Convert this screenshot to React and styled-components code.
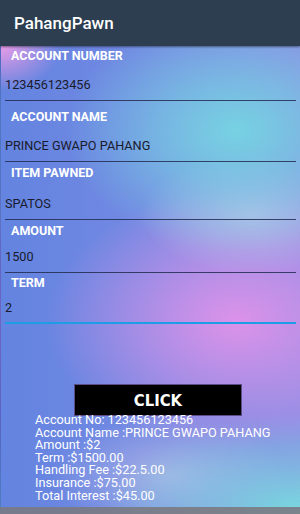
import React from "react";
import styled, { createGlobalStyle } from "styled-components";

const Global = createGlobalStyle`
  html, body {
    margin: 0;
    padding: 0;
    height: 100%;
  }
  body {
    font-family: Roboto, "Liberation Sans", sans-serif;
  }
  #root {
    height: 100%;
  }
`;

const Screen = styled.div`
  position: relative;
  height: 514px;
  overflow: hidden;
  display: flex;
  flex-direction: column;
`;

const Toolbar = styled.div`
  height: 46px;
  flex-shrink: 0;
  background: #2c3e50;
  display: flex;
  align-items: center;
  padding-left: 14px;
  color: #fff;
  font-size: 17px;
  font-weight: 500;
  box-shadow: 0 1px 2px rgba(0, 0, 0, 0.45);
  position: relative;
  z-index: 1;
`;

/* gradient blobs measured from the content top (y = 46) */
const Content = styled.div`
  flex: 1;
  display: flex;
  flex-direction: column;
  border-left: 1px solid rgba(50, 70, 170, 0.6);
  background:
    radial-gradient(60px 45px at 0px 0px, #e99ce6 0%, rgba(233, 156, 230, 0) 100%),
    radial-gradient(170px 120px at 235px 85px, #76d2e2 0%, rgba(118, 210, 226, 0.6) 45%, rgba(118, 210, 226, 0) 100%),
    radial-gradient(110px 60px at 250px 168px, #b6bce8 0%, rgba(182, 188, 232, 0) 100%),
    radial-gradient(190px 130px at 235px 275px, #dc92e9 0%, rgba(220, 146, 233, 0.55) 45%, rgba(220, 146, 233, 0) 100%),
    radial-gradient(200px 100px at 300px 468px, #78dbde 0%, rgba(120, 219, 222, 0.5) 45%, rgba(120, 219, 222, 0) 100%),
    radial-gradient(120px 60px at 170px 430px, #a6b0e6 0%, rgba(166, 176, 230, 0) 100%),
    linear-gradient(90deg, #6384e0 0%, #7088e2 40%, #8a8ee4 100%);
`;

const Field = styled.div`
  display: flex;
  flex-direction: column;
  margin: 0 4px;
  padding-top: ${(p) => p.$mt}px;
  border-bottom: ${(p) => (p.$focused ? "2px solid #1c9de6" : "1px solid rgba(34, 44, 80, 0.85)")};
`;

const Label = styled.div`
  font-size: 12.5px;
  font-weight: 700;
  line-height: 14px;
  color: #fff;
  padding-left: 6px;
`;

const Value = styled.div`
  font-size: 12.7px;
  line-height: 16px;
  color: #1a1b2c;
  margin-top: ${(p) => p.$gap}px;
  padding-bottom: ${(p) => (p.$focused ? 6 : 7)}px;
`;

const Button = styled.div`
  margin: 60px 0 0 73px;
  width: 166px;
  height: 30px;
  background: #000;
  border: 1px solid #5c4c86;
  color: #fff;
  font-family: "DejaVu Sans Condensed", "DejaVu Sans", sans-serif;
  font-weight: 700;
  font-size: 16.5px;
  display: flex;
  align-items: center;
  justify-content: center;
`;

const Result = styled.div`
  margin: -2px 0 0 34px;
  font-size: 12.7px;
  line-height: 12.6px;
  color: #fff;
  white-space: nowrap;
`;

const NavBar = styled.div`
  position: absolute;
  left: 0;
  right: 0;
  bottom: 0;
  height: 7px;
  background: rgba(122, 122, 130, 0.9);
`;

const fields = [
  { label: "ACCOUNT NUMBER", value: "123456123456", mt: 3, gap: 14 },
  { label: "ACCOUNT NAME", value: "PRINCE GWAPO PAHANG", mt: 9, gap: 14 },
  { label: "ITEM PAWNED", value: "SPATOS", mt: 4, gap: 16 },
  { label: "AMOUNT", value: "1500", mt: 4, gap: 11 },
  { label: "TERM", value: "2", mt: 3, gap: 10, focused: true },
];

const results = [
  "Account No: 123456123456",
  "Account Name :PRINCE GWAPO PAHANG",
  "Amount :$2",
  "Term :$1500.00",
  "Handling Fee :$22.5.00",
  "Insurance :$75.00",
  "Total Interest :$45.00",
];

export default function App() {
  return (
    <>
      <Global />
      <Screen>
        <Toolbar>PahangPawn</Toolbar>
        <Content>
          {fields.map((f) => (
            <Field key={f.label} $mt={f.mt} $focused={f.focused}>
              <Label>{f.label}</Label>
              <Value $gap={f.gap} $focused={f.focused}>
                {f.value}
              </Value>
            </Field>
          ))}
          <Button>CLICK</Button>
          <Result>
            {results.map((r) => (
              <div key={r}>{r}</div>
            ))}
          </Result>
        </Content>
        <NavBar />
      </Screen>
    </>
  );
}
